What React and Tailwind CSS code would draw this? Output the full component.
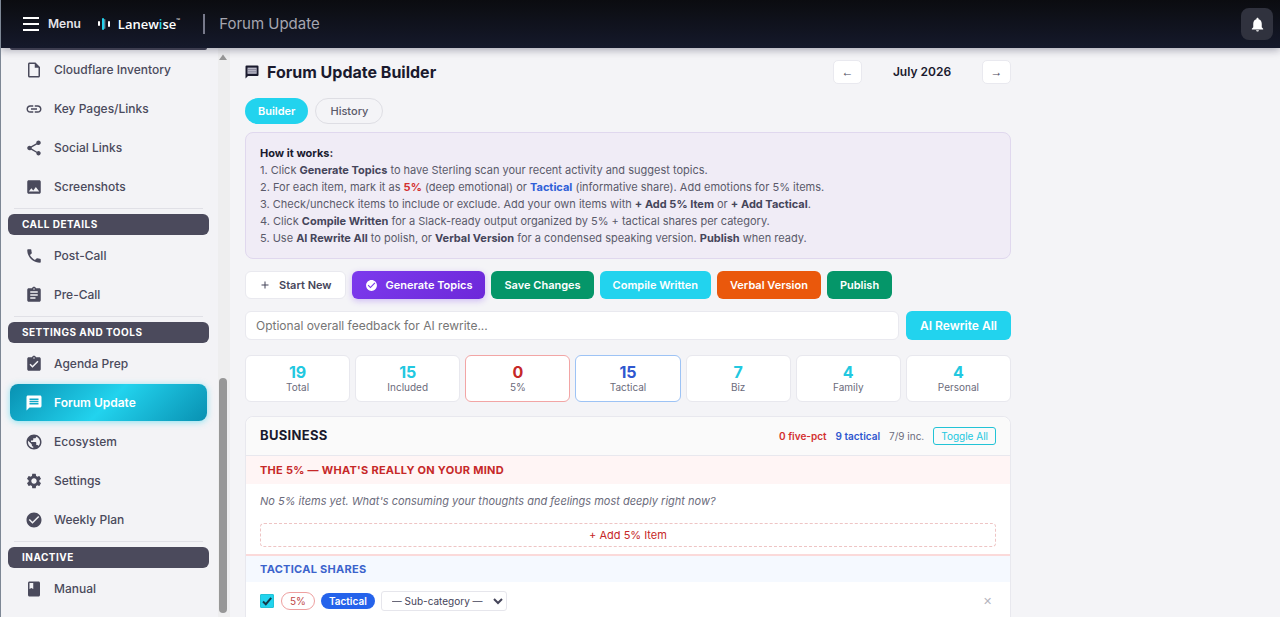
import { useState } from "react";
import {
  MdOutlineInsertDriveFile,
  MdLink,
  MdShare,
  MdImage,
  MdPhone,
  MdAssignment,
  MdAssignmentTurnedIn,
  MdMessage,
  MdPublic,
  MdSettings,
  MdCheckCircle,
  MdBook,
  MdNotifications,
  MdAdd,
} from "react-icons/md";

const navGroups = [
  {
    title: null,
    items: [
      { label: "Cloudflare Inventory", icon: MdOutlineInsertDriveFile },
      { label: "Key Pages/Links", icon: MdLink },
      { label: "Social Links", icon: MdShare },
      { label: "Screenshots", icon: MdImage },
    ],
  },
  {
    title: "CALL DETAILS",
    items: [
      { label: "Post-Call", icon: MdPhone },
      { label: "Pre-Call", icon: MdAssignment },
    ],
  },
  {
    title: "SETTINGS AND TOOLS",
    items: [
      { label: "Agenda Prep", icon: MdAssignmentTurnedIn },
      { label: "Forum Update", icon: MdMessage, active: true },
      { label: "Ecosystem", icon: MdPublic },
      { label: "Settings", icon: MdSettings },
      { label: "Weekly Plan", icon: MdCheckCircle },
    ],
  },
  {
    title: "INACTIVE",
    items: [{ label: "Manual", icon: MdBook }],
  },
];

const stats = [
  { value: 19, label: "Total", color: "text-[#22c8e0]", border: "border-[#e8e8ee]" },
  { value: 15, label: "Included", color: "text-[#22c8e0]", border: "border-[#e8e8ee]" },
  { value: 0, label: "5%", color: "text-[#c62828]", border: "border-[#f2a5a5]" },
  { value: 15, label: "Tactical", color: "text-[#2f57cf]", border: "border-[#9dc3f5]" },
  { value: 7, label: "Biz", color: "text-[#22c8e0]", border: "border-[#e8e8ee]" },
  { value: 4, label: "Family", color: "text-[#22c8e0]", border: "border-[#e8e8ee]" },
  { value: 4, label: "Personal", color: "text-[#22c8e0]", border: "border-[#e8e8ee]" },
];

function Logo() {
  return (
    <a href="#home" className="flex items-center gap-2 text-white">
      <svg width="12" height="14" viewBox="0 0 12 14" aria-hidden="true">
        <rect x="0" y="4" width="2" height="5" rx="1" fill="#ffffff" />
        <rect x="4" y="1" width="2" height="12" rx="1" fill="#22d3ee" />
        <rect x="6" y="2" width="1.4" height="10" rx="0.7" fill="#5b8c9c" />
        <rect x="10" y="4" width="2" height="6" rx="1" fill="#ffffff" />
      </svg>
      <span className="flex font-['Open_Sans',sans-serif] text-[13px] font-semibold leading-5">
        Lanew<span className="text-[#22d3ee]">i</span>se
        <span className="text-[5px] leading-3">™</span>
      </span>
    </a>
  );
}

function TopBar() {
  return (
    <header className="relative z-10 flex h-12 shrink-0 items-center justify-between bg-linear-to-b from-[#0b0c10] to-[#15192b] pl-[22px] pr-[7px] shadow-[0_2px_8px_rgba(20,20,50,0.35)]">
      <div className="flex items-center">
        <button className="flex items-center gap-[9px] text-xs font-semibold text-[#e4e4ea]">
          <svg width="16" height="14" viewBox="0 0 16 14" aria-hidden="true">
            <path d="M0 1h16M0 7h16M0 13h16" stroke="#ffffff" strokeWidth="1.8" />
          </svg>
          Menu
        </button>
        <div className="ml-[17px]">
          <Logo />
        </div>
        <div className="ml-[23px] h-5 w-0.5 bg-[#77798a]" />
        <span className="ml-3.5 text-[15px] leading-5 text-[#a5a6b0]">Forum Update</span>
      </div>
      <button
        aria-label="Notifications"
        className="flex size-8 items-center justify-center rounded-lg bg-[#30323e] text-white"
      >
        <MdNotifications size={17} />
      </button>
    </header>
  );
}

function NavItem({ item }) {
  const Icon = item.icon;
  return (
    <a
      href="#nav"
      className={`flex h-[37px] items-center gap-[11px] rounded-lg pl-[15px] text-xs ${
        item.active
          ? "bg-linear-135 from-[#0891b2] via-[#22d3ee] to-[#0891b2] font-semibold text-white shadow-[0_1px_6px_rgba(34,211,238,0.5)]"
          : "font-medium text-[#4a4a5c]"
      }`}
    >
      <Icon size={18} />
      {item.label}
    </a>
  );
}

function Sidebar() {
  return (
    <aside className="flex w-[229px] shrink-0 bg-[#f3f3f6]">
      <nav className="min-w-0 flex-1 overflow-hidden pl-[7px] pr-[9px]">
        <div className="mx-0.5 h-0.5 rounded-b-lg bg-[#4a4a5a]" />
        <div className="pt-px">
          {navGroups.map((group, i) => (
            <div key={i}>
              {group.title && (
                <>
                  <div className="mx-1.5 mb-[5px] mt-[3px] h-px bg-[#e0e0e6]" />
                  <h2 className="mb-0.5 h-[21px] rounded-md bg-[#4b4a5c] pl-3.5 text-[10px] font-bold leading-[21px] tracking-wider text-white">
                    {group.title}
                  </h2>
                </>
              )}
              <div className="flex flex-col gap-0.5 px-0.5">
                {group.items.map((item) => (
                  <NavItem key={item.label} item={item} />
                ))}
              </div>
            </div>
          ))}
        </div>
      </nav>
      {/* scroll track */}
      <div className="flex w-3 shrink-0 flex-col items-center justify-between bg-[#eeeeef] pb-1 pr-0.5 pt-1.5">
        <svg width="8" height="6" viewBox="0 0 8 6" aria-hidden="true">
          <path d="M4 0.5L8 6H0z" fill="#979797" />
        </svg>
        <div className="h-[42%] w-2 rounded-full bg-[#979797]" />
      </div>
    </aside>
  );
}

function HowItWorks() {
  return (
    <section className="mt-2 rounded-lg border border-[#e0d8ee] bg-[#f0ecf6] px-3.5 pb-[11px] pt-3 text-[11px] leading-[17px] text-[#5a5a6a] [&_strong]:font-bold [&_strong]:text-[#45455a]">
      <h2 className="font-bold text-[#1a1a2e]">How it works:</h2>
      <p>
        1. Click <strong>Generate Topics</strong> to have Sterling scan your recent activity and suggest topics.
      </p>
      <p>
        2. For each item, mark it as <b className="text-[#d32f2f]">5%</b> (deep emotional) or{" "}
        <b className="text-[#2f5fd8]">Tactical</b> (informative share). Add emotions for 5% items.
      </p>
      <p>
        3. Check/uncheck items to include or exclude. Add your own items with <strong>+ Add 5% Item</strong> or{" "}
        <strong>+ Add Tactical</strong>.
      </p>
      <p>
        4. Click <strong>Compile Written</strong> for a Slack-ready output organized by 5% + tactical shares per
        category.
      </p>
      <p>
        5. Use <strong>AI Rewrite All</strong> to polish, or <strong>Verbal Version</strong> for a condensed speaking
        version. <strong>Publish</strong> when ready.
      </p>
    </section>
  );
}

function Actions() {
  const base = "flex h-7 items-center rounded-md px-[13px] text-[11px] font-semibold";
  return (
    <div className="mt-3 flex flex-wrap gap-1.5">
      <button className={`${base} gap-2 border border-[#e9e9ef] bg-white text-[#45455a]`}>
        <MdAdd size={12} />
        Start New
      </button>
      <button
        className={`${base} gap-2 bg-linear-135 from-[#7c3aed] to-[#6d28d9] text-white shadow-[0_2px_6px_rgba(124,58,237,0.3)]`}
      >
        <MdCheckCircle size={13} />
        Generate Topics
      </button>
      <button className={`${base} bg-[#059669] text-white`}>Save Changes</button>
      <button className={`${base} bg-[#22d3ee] text-white`}>Compile Written</button>
      <button className={`${base} bg-[#ea580c] text-white`}>Verbal Version</button>
      <button className={`${base} bg-[#059669] text-white`}>Publish</button>
    </div>
  );
}

function MonthButton({ label, children }) {
  return (
    <button
      aria-label={label}
      className="h-6 w-[29px] rounded-[5px] border border-[#e9e9ef] bg-white font-['Liberation_Sans',sans-serif] text-xs text-[#45455a]"
    >
      {children}
    </button>
  );
}

function BusinessCard() {
  const [included, setIncluded] = useState(true);

  return (
    <section className="mt-3.5 rounded-t-lg border border-[#e8e8ee] bg-white">
      <div className="flex h-[39px] items-center justify-between rounded-t-lg border-b border-[#e8e8ee] bg-[#fafafa] px-3.5">
        <h2 className="text-[13px] font-bold tracking-wide text-[#1a1a2e]">BUSINESS</h2>
        <div className="flex items-center gap-[9px] text-[10px]">
          <span className="font-semibold text-[#d32f2f]">0 five-pct</span>
          <span className="font-semibold text-[#2f57cf]">9 tactical</span>
          <span className="text-[#6b6b7b]">7/9 inc.</span>
          <button className="h-[18px] rounded-[3px] border border-[#22c3d6] px-[7px] leading-4 text-[#22c8e0]">
            Toggle All
          </button>
        </div>
      </div>

      <h3 className="h-7 bg-[#fff5f5] px-3.5 text-[11px] font-bold leading-7 tracking-wide text-[#c62828]">
        THE 5% — WHAT'S REALLY ON YOUR MIND
      </h3>
      <p className="px-3.5 pt-[7px] text-[11px] italic leading-5 text-[#6b6b7b]">
        No 5% items yet. What's consuming your thoughts and feelings most deeply right now?
      </p>
      <div className="px-3.5 pb-[7px] pt-2.5">
        <button className="h-6 w-full rounded-sm border border-dashed border-[#eec4c4] text-[11px] text-[#c62828]">
          + Add 5% Item
        </button>
      </div>

      <h3 className="h-7 border-t-2 border-[#fbdada] bg-[#f5f9ff] px-3.5 text-[11px] font-bold leading-[26px] tracking-wide text-[#3b63cc]">
        TACTICAL SHARES
      </h3>
      <div className="flex items-center px-3.5 py-[9px]">
        <label className="relative flex size-3.5 items-center justify-center">
          <input
            type="checkbox"
            aria-label="Include item"
            checked={included}
            onChange={(e) => setIncluded(e.target.checked)}
            className="size-3.5 appearance-none rounded-[1px] border border-[#22c3d6] checked:bg-[#22d3ee]"
          />
          {included && (
            <svg className="pointer-events-none absolute inset-0" viewBox="0 0 14 14" aria-hidden="true">
              <path d="M3 7.5L5.8 10.2L11.2 3.8" fill="none" stroke="#143a4a" strokeWidth="2" />
            </svg>
          )}
        </label>
        <button className="ml-[7px] h-[18px] rounded-full border border-[#eea0a0] px-2 text-[10px] leading-4 text-[#c04848]">
          5%
        </button>
        <button className="ml-1.5 h-4 rounded-full bg-[#2563eb] px-2 text-[10px] font-semibold leading-4 text-white">
          Tactical
        </button>
        <select
          aria-label="Sub-category"
          className="ml-1.5 h-5 w-[126px] rounded-[3px] border border-[#e6e6ec] bg-white pl-[6px] text-[10px] text-[#45455a]"
        >
          <option>— Sub-category —</option>
        </select>
        <button aria-label="Remove item" className="ml-auto mr-1 text-[11px] leading-4 text-[#b5b5be]">
          ✕
        </button>
      </div>
    </section>
  );
}

export default function App() {
  return (
    <div className="flex h-screen flex-col overflow-hidden border-l border-[#7d8795] bg-[#f4f4f7] font-[Inter,sans-serif] text-[#1a1a2e]">
      <TopBar />
      <div className="flex min-h-0 flex-1">
        <Sidebar />
        <main className="min-w-0 flex-1 overflow-hidden px-[15px] pt-3">
          <div className="max-w-[766px]">
            <div className="flex items-center justify-between">
              <h1 className="flex items-center gap-2 text-base font-bold">
                <svg width="14" height="14" viewBox="0 0 14 14" aria-hidden="true">
                  <path d="M1.5 0.5h11a1 1 0 0 1 1 1v8.5a1 1 0 0 1-1 1H3L0.5 13.5v-12a1 1 0 0 1 1-1z" fill="#1a1a2e" />
                  <path d="M2.5 2.6h9.2v6.2H2.5z" fill="#b9b8c8" />
                  <path d="M3 4.6h8.5M3 6.8h8.5" stroke="#77768c" strokeWidth="0.8" />
                </svg>
                Forum Update Builder
              </h1>
              <div className="flex items-center">
                <MonthButton label="Previous month">←</MonthButton>
                <span className="w-[120px] text-center text-xs font-semibold">July 2026</span>
                <MonthButton label="Next month">→</MonthButton>
              </div>
            </div>

            <div className="mt-3.5 flex gap-[7px] text-[11px]">
              <button className="h-[26px] rounded-full bg-[#22d3ee] px-[13px] font-semibold text-white">Builder</button>
              <button className="h-[26px] rounded-full border border-[#dedee4] px-3.5 font-medium text-[#5a5a6a]">
                History
              </button>
            </div>

            <HowItWorks />
            <Actions />

            <div className="mt-3 flex gap-[7px]">
              <input
                type="text"
                aria-label="Overall feedback"
                placeholder="Optional overall feedback for AI rewrite..."
                className="h-[29px] min-w-0 flex-1 rounded-md border border-[#e9e9ef] bg-white px-2.5 text-xs placeholder:text-[#757575]"
              />
              <button className="h-[29px] rounded-md bg-[#22d3ee] px-3.5 text-xs font-semibold text-white">
                AI Rewrite All
              </button>
            </div>

            <div className="mt-[15px] grid grid-cols-7 gap-[5px]">
              {stats.map((s) => (
                <div
                  key={s.label}
                  className={`flex h-[47px] flex-col items-center justify-center rounded-md border bg-white ${s.border}`}
                >
                  <div className={`text-base font-bold leading-[17px] ${s.color}`}>{s.value}</div>
                  <div className="text-[10px] leading-[13px] text-[#6b6b7b]">{s.label}</div>
                </div>
              ))}
            </div>

            <BusinessCard />
          </div>
        </main>
      </div>
    </div>
  );
}
